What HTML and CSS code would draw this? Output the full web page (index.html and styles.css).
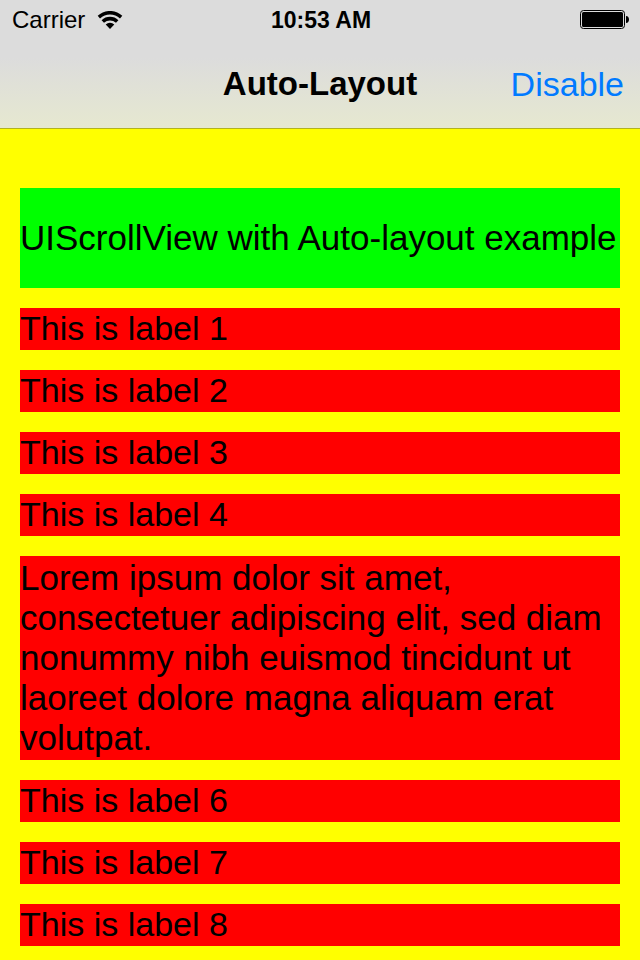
FILE: index.html
```html
<!DOCTYPE html>
<html lang="en">
<head>
<meta charset="utf-8">
<meta name="viewport" content="width=device-width, initial-scale=1">
<title>Auto-Layout</title>
<link rel="stylesheet" href="styles.css">
</head>
<body>
<header class="top">
  <div class="status">
    <div class="carrier"><span>Carrier</span>
      <svg class="wifi" viewBox="0 0 26 18" aria-hidden="true"><path d="M.7 4.800a18 18 0 0 1 24.600 0l-2.300 2.600a15 15 0 0 0-20 0zM4.600 9.200a12.200 12.200 0 0 1 16.800 0l-2.400 2.600a9 9 0 0 0-12 0zM8.700 13.600a6.200 6.200 0 0 1 8.600 0l-4.300 4.400z"/></svg>
    </div>
    <time class="clock">10:53 AM</time>
    <svg class="battery" viewBox="0 0 50 20" aria-hidden="true"><rect x=".5" y=".5" width="44" height="18" rx="3" fill="none" stroke="#000"/><rect x="2" y="2" width="41" height="15" rx="1.500"/><path d="M46 6c4 0 4 7 0 7z"/></svg>
  </div>
  <nav class="bar">
    <h1 class="title">Auto-Layout</h1>
    <button class="action" type="button">Disable</button>
  </nav>
</header>
<main class="content">
  <p class="heading">UIScrollView with Auto-layout example</p>
  <p class="label">This is label 1</p>
  <p class="label">This is label 2</p>
  <p class="label">This is label 3</p>
  <p class="label">This is label 4</p>
  <p class="label long">Lorem ipsum dolor sit amet, consectetuer adipiscing elit, sed diam nonummy nibh euismod tincidunt ut laoreet dolore magna aliquam erat volutpat.</p>
  <p class="label">This is label 6</p>
  <p class="label">This is label 7</p>
  <p class="label">This is label 8</p>
</main>
</body>
</html>
```

FILE: styles.css
```css
* { box-sizing: border-box; }
body {
  margin: 0;
  background: #ff0;
  color: #000;
  font-family: "Liberation Sans", Arial, sans-serif;
}
.top {
  background: linear-gradient(#dcdcdc 0, #dcdcdc 45%, #e6e8d0 100%);
  border-bottom: 1px solid #b2b220;
}
.status, .bar {
  display: grid;
  grid-template-columns: 1fr auto 1fr;
  align-items: center;
}
.status { height: 40px; padding: 0 10px 0 12px; font-size: 24px; }
.carrier { display: flex; align-items: center; gap: 12px; }
.wifi { width: 26px; height: 18px; }
.clock { font-weight: 600; font-size: 23px; }
.battery { width: 50px; height: 20px; justify-self: end; }
.bar { height: 88px; padding: 0 16px; }
.title { grid-column: 2; margin: 0; font-size: 33px; font-weight: 600; }
.action {
  justify-self: end;
  padding: 0;
  border: 0;
  background: none;
  color: #007aff;
  font: inherit;
  font-size: 34px;
  cursor: pointer;
}
.content {
  display: flex;
  flex-direction: column;
  gap: 20px;
  padding: 59px 20px 14px;
  font-size: 34px;
}
.content p { margin: 0; }
.heading { background: #0f0; font-size: 35px; line-height: 100px; }
.label { padding-bottom: 2px; background: #f00; line-height: 40px; }
.long { padding-top: 2px; font-size: 35px; }
```
